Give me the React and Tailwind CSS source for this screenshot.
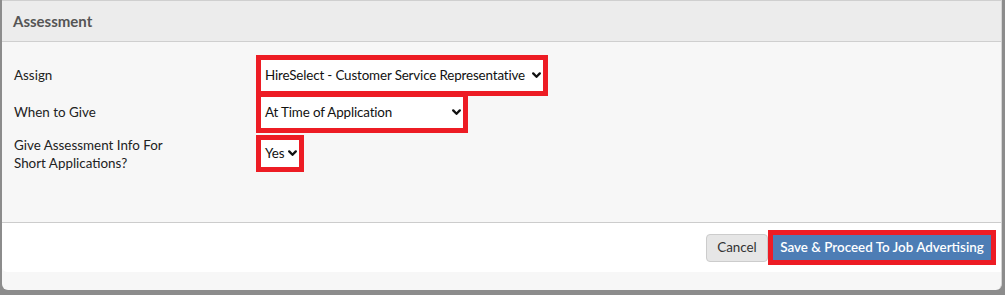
import { useState } from "react";

const font = { fontFamily: "Lato, 'Noto Sans', sans-serif" };

function Chevron() {
  return (
    <svg width="9" height="7" viewBox="0 0 9 7" className="shrink-0">
      <path d="M1.2 1.4 L4.5 4.8 L7.8 1.4" fill="none" stroke="#111" strokeWidth="2.3" strokeLinecap="round" strokeLinejoin="round" />
    </svg>
  );
}

function FakeSelect({ value, width, height }) {
  return (
    <div
      className={`flex items-center justify-between gap-[3px] bg-white pl-[4px] pr-[2px] text-[13.4px] tracking-[-0.15px] text-[#111] outline-[5px] outline-solid outline-[#ed1c24] ${width} ${height}`}
    >
      <span className="whitespace-nowrap">{value}</span>
      <Chevron />
    </div>
  );
}

export default function App() {
  const [assign] = useState("HireSelect - Customer Service Representative");

  return (
    <div style={font} className="w-[1005px] h-[295px] bg-[#8c8c8c] pl-[2px] pr-[3px] pb-[5px]">
      <div className="h-full flex flex-col bg-[#f7f7f7] rounded-b-[6px] border-r border-[#d4d4d4]">
        {/* header */}
        <div className="h-[42px] shrink-0 bg-[#ececec] border-t border-b border-[#cfcfcf] flex items-center pl-[11px]">
          <h3 className="text-[15px] font-bold text-[#555]">Assessment</h3>
        </div>

        {/* body */}
        <div className="flex-1 pl-[12px] pt-[18px]">
          <div className="flex items-center h-[31px]">
            <label className="w-[247px] text-[13.4px] text-[#222]">Assign</label>
            <FakeSelect value={assign} width="w-[282px]" height="h-[31px]" />
          </div>
          <div className="flex items-center h-[31px] mt-[6px]">
            <label className="w-[247px] text-[13.4px] text-[#222]">When to Give</label>
            <FakeSelect value="At Time of Application" width="w-[202px]" height="h-[31px]" />
          </div>
          <div className="flex items-center h-[33px] mt-[9px]">
            <label className="w-[247px] text-[13.4px] leading-[18px] text-[#222]">
              Give Assessment Info For
              <br />
              Short Applications?
            </label>
            <FakeSelect value="Yes" width="w-[38px]" height="h-[27px]" />
          </div>
        </div>

        {/* footer */}
        <div className="h-[50px] shrink-0 bg-white border-t border-[#cccccc] rounded-bl-[5px] flex items-center justify-end gap-[5px] pr-[10px]">
          <button className="h-[28px] w-[62px] bg-[#e6e6e6] border border-[#cccccc] rounded-[4px] text-[13.4px] text-[#333]">
            Cancel
          </button>
          <button className="h-[25px] w-[218px] bg-[#4d7db5] text-white text-[13.4px] font-semibold outline-[5px] outline-solid outline-[#ed1c24]">
            Save &amp; Proceed To Job Advertising
          </button>
        </div>
        <div className="h-[18px] shrink-0" />
      </div>
    </div>
  );
}
